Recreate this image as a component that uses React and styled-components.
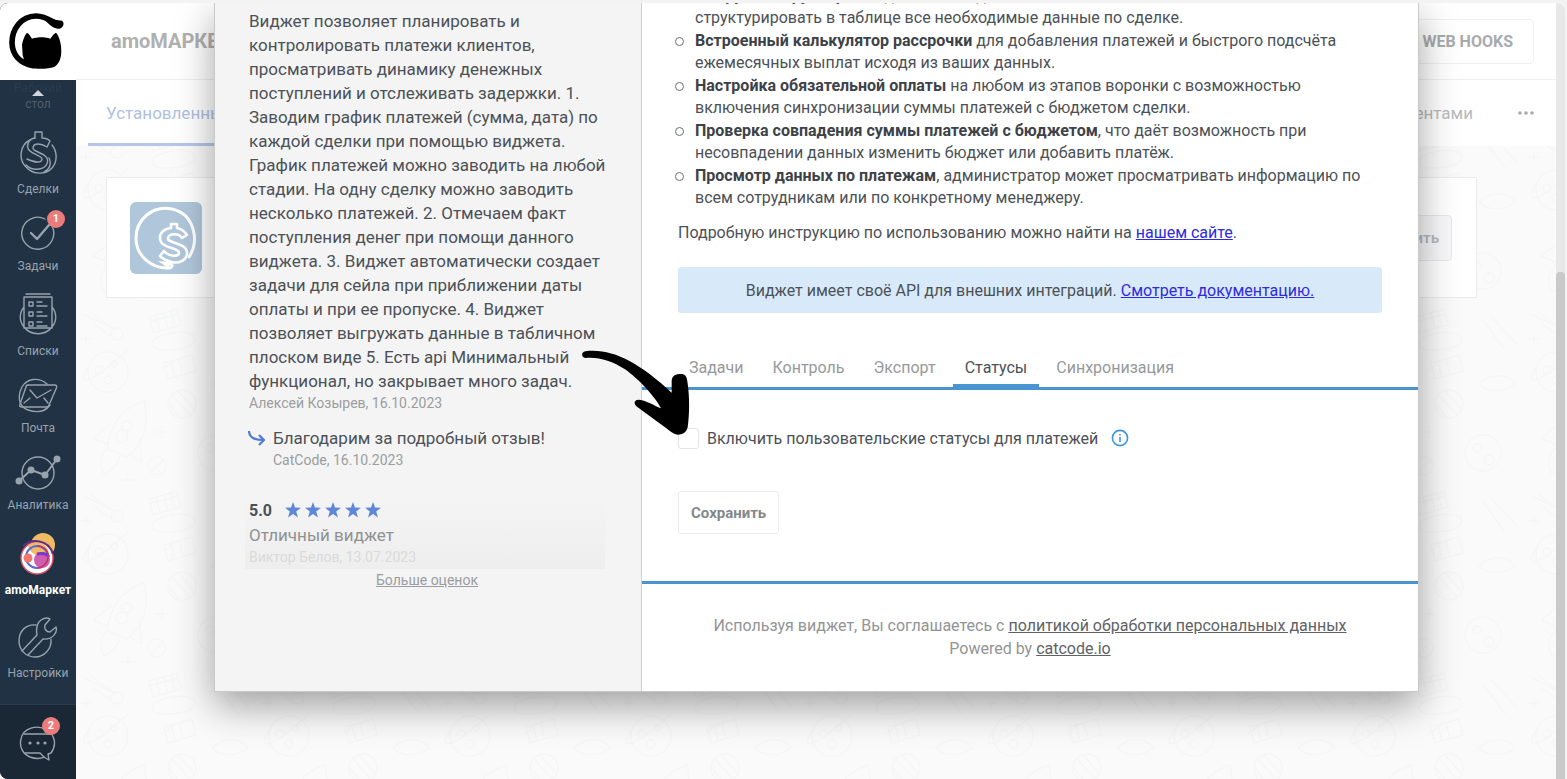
import React from "react";
import styled, { createGlobalStyle, css } from "styled-components";

const GlobalStyle = createGlobalStyle`
  * {
    box-sizing: border-box;
  }
  body {
    margin: 0;
    background: #f3f3f3;
    color: #4c5157;
    font-family: Roboto, "Noto Sans", sans-serif;
    font-size: 17px;
  }
  button, input {
    font-family: inherit;
  }
`;

const Frame = styled.div`
  height: 100vh;
  padding: 3px 2px 0 0;
  overflow: hidden;
`;

const Window = styled.div`
  display: flex;
  height: 100%;
  overflow: hidden;
  border-radius: 8px 8px 0 8px;
  background: #fafafa;
`;

/* ---------- sidebar ---------- */

const Sidebar = styled.aside`
  display: flex;
  flex-direction: column;
  flex: none;
  width: 76px;
  background: #203244;
`;

const Logo = styled.a`
  display: block;
  height: 77px;
  background: #fff;
  svg {
    display: block;
  }
`;

const Menu = styled.nav`
  display: flex;
  flex-direction: column;
  flex: 1;
  align-items: center;
  min-height: 0;
  overflow: hidden;
`;

const MenuTop = styled.a`
  position: relative;
  flex: none;
  height: 51px;
  color: #4f5e6b;
  font-size: 12px;
  line-height: 16px;
  text-align: center;
  text-decoration: none;
  span {
    color: #2a3c4d;
  }
  svg {
    position: absolute;
    top: 10px;
    left: 50%;
    margin-left: -6px;
  }
`;

const MenuItem = styled.a`
  display: flex;
  flex-direction: column;
  align-items: center;
  flex: none;
  position: relative;
  margin-bottom: 19px;
  color: ${(p) => (p.$active ? "#fff" : "#98a3ad")};
  font-size: 12px;
  font-weight: ${(p) => (p.$active ? 700 : 400)};
  line-height: 16px;
  text-decoration: none;
  svg {
    margin-bottom: 7px;
  }
`;

const Badge = styled.span`
  position: absolute;
  top: -6px;
  left: 50%;
  width: 18px;
  height: 18px;
  margin-left: 9px;
  border-radius: 50%;
  background: #ec7b7b;
  color: #fff;
  font-size: 11px;
  font-weight: 700;
  line-height: 18px;
  text-align: center;
`;

const Chat = styled.button`
  display: flex;
  justify-content: center;
  flex: none;
  height: 75px;
  padding: 21px 0 0;
  border: 0;
  border-top: 1px solid #2b3d4e;
  background: #1a2836;
  color: #98a3ad;
  span {
    position: relative;
  }
  ${Badge} {
    position: absolute;
    top: -9px;
    margin-left: 4px;
  }
`;

/* ---------- page under the modal ---------- */

const Content = styled.main`
  position: relative;
  flex: 1;
  min-width: 0;
  overflow: hidden;
`;

const Pattern = styled.svg`
  position: absolute;
  inset: 0;
  width: 100%;
  height: 100%;
`;

const Header = styled.header`
  display: flex;
  position: relative;
  align-items: center;
  justify-content: space-between;
  height: 77px;
  padding: 0 22px 0 35px;
  border-bottom: 1px solid #efefef;
  background: #fff;
`;

const Title = styled.h1`
  margin: 0;
  color: #b0b0b0;
  font-size: 20px;
`;

const HookButton = styled.button`
  height: 45px;
  padding: 0 20px;
  border: 1px solid #f0f0f0;
  border-radius: 4px;
  background: #fff;
  color: #a8abae;
  font-size: 16px;
  font-weight: 700;
`;

const Sections = styled.nav`
  display: flex;
  position: relative;
  align-items: stretch;
  height: 66px;
  padding: 0 22px 0 12px;
  background: #fff;
`;

const Section = styled.a`
  display: flex;
  align-items: center;
  margin-right: ${(p) => (p.$last ? "45px" : 0)};
  margin-left: ${(p) => (p.$last ? "auto" : 0)};
  padding: ${(p) => (p.$last ? "2px 0 0" : "2px 18px 0")};
  border-bottom: 3px solid ${(p) => (p.$active ? "#b5c6ea" : "transparent")};
  color: ${(p) => (p.$active ? "#afbfe3" : "#b8babc")};
  text-decoration: none;
`;

const MoreButton = styled.button`
  padding: 0;
  border: 0;
  background: none;
  color: #a8abae;
  line-height: 0;
`;

const Card = styled.section`
  display: flex;
  position: relative;
  align-items: center;
  justify-content: space-between;
  height: 121px;
  margin: 31px 79px 0 30px;
  padding: 0 24px 0 23px;
  border: 1px solid #ececec;
  background: #fff;
`;

const SetupButton = styled.button`
  height: 46px;
  padding: 0 12px;
  border: 1px solid #e8e8e8;
  border-radius: 4px;
  background: #f8f8fa;
  color: #b8babc;
  font-size: 15px;
  font-weight: 700;
`;

const ScrollTrack = styled.div`
  display: flex;
  flex: none;
  width: 9px;
  padding-top: 269px;
  background: #e8e8e8;
`;

const ScrollThumb = styled.div`
  flex: 1;
  border-radius: 4px 4px 0 0;
  background: #c9c9c9;
`;

/* ---------- modal ---------- */

const Overlay = styled.div`
  position: absolute;
  inset: 0;
  padding: 0 137px 0 138px;
`;

const Modal = styled.div`
  display: grid;
  grid-template-columns: 427px 1fr;
  position: relative;
  border: 1px solid #c9c9c9;
  border-top: 0;
  background: #fff;
  box-shadow: 0 14px 36px rgba(0, 0, 0, 0.36);
`;

const Reviews = styled.aside`
  padding: 6px 36px 0 34px;
  border-right: 1px solid #d0d0d0;
  background: #f4f4f4;
`;

const ReviewText = styled.p`
  margin: 0;
  line-height: 24px;
  white-space: nowrap;
  color: ${(p) => (p.$soft ? "#8f9193" : "inherit")};
`;

const Author = styled.div`
  color: ${(p) => (p.$faded ? "#dadada" : "#9b9d9f")};
  font-size: 14px;
  line-height: 20px;
`;

const Reply = styled.div`
  display: flex;
  gap: 8px;
  margin: 13px 0 27px;
  svg {
    flex: none;
    margin: 4px 0 0 -1px;
  }
`;

const Fading = styled.div`
  margin: 0 0 0 -4px;
  padding: 0 0 2px 4px;
  background: linear-gradient(#f4f4f4, #eeeeee);
`;

const Rating = styled.div`
  display: flex;
  align-items: center;
  gap: 13px;
  height: 26px;
  font-size: 16px;
  font-weight: 700;
`;

const Stars = styled.span`
  display: flex;
  gap: 4px;
`;

const MoreReviews = styled.div`
  text-align: center;
  a {
    color: #9b9d9f;
    font-size: 14px;
    line-height: 20px;
  }
`;

const Details = styled.section`
  min-width: 0;
  overflow: hidden;
  font-size: 16px;
`;

const Description = styled.div`
  padding: 0 36px;
  line-height: 22px;
  a {
    color: #2d2be0;
  }
`;

const Features = styled.ul`
  margin: -18px 0 13px;
  padding-left: 17px;
  list-style: none;
`;

const Feature = styled.li`
  position: relative;
  margin-bottom: 1px;
  white-space: nowrap;
  &::before {
    content: "";
    position: absolute;
    top: 7px;
    left: -20px;
    width: 7px;
    height: 7px;
    border: 1px solid #6a6e73;
    border-radius: 50%;
  }
  b {
    color: #3d4248;
  }
`;

const Banner = styled.div`
  margin: 23px 0 42px;
  padding: 13px 12px 11px;
  border-radius: 3px;
  background: #d8eaf9;
  text-align: center;
`;

const Tabs = styled.div`
  display: flex;
  gap: 5px;
  padding-left: 35px;
  border-bottom: 3px solid #4a94d0;
`;

const Tab = styled.button`
  padding: 1px 12px 4px;
  border: 0;
  border-bottom: 3px solid transparent;
  background: none;
  color: #97999b;
  font-size: 16px;
  line-height: 24px;
  ${(p) =>
    p.$active &&
    css`
      border-color: #4a94d0;
      color: #4c5157;
    `}
`;

const Panel = styled.form`
  padding: 36px 36px 47px;
  border-bottom: 3px solid #4a94d0;
`;

const CheckRow = styled.div`
  display: flex;
  align-items: center;
  height: 24px;
  margin-bottom: 41px;
  label {
    margin: 0 13px 0 8px;
  }
`;

const Checkbox = styled.input`
  appearance: none;
  width: 21px;
  height: 21px;
  margin: 0;
  border: 1px solid #e4e4e4;
  border-radius: 3px;
  background: #fff;
`;

const SaveButton = styled.button`
  height: 43px;
  padding: 0 12px;
  border: 1px solid #ececec;
  border-radius: 3px;
  background: #fff;
  color: #85888b;
  font-size: 15px;
  font-weight: 700;
`;

const Footer = styled.footer`
  padding: 30px 0 31px;
  color: #929496;
  line-height: 23px;
  text-align: center;
  a {
    color: #5f6265;
  }
`;

const Pointer = styled.svg`
  position: absolute;
  top: 337px;
  left: 360px;
  pointer-events: none;
`;

const line = {
  fill: "none",
  stroke: "currentColor",
  strokeWidth: 1.4,
  strokeLinecap: "round",
  strokeLinejoin: "round",
};

const CatLogo = () => (
  <svg width="76" height="77" viewBox="0 9 228 231">
    <path
      d="M176 75C152 63 138 48 108 48C62 49 36 88 36 128C37 163 58 190 100 197"
      fill="none"
      stroke="#000"
      strokeWidth="17"
      strokeLinecap="round"
    />
    <path d="M138 48C156 60 172 60 186 62C195 68 190 84 178 86C164 88 152 78 138 64Z" />
    <path d="M66 134C69 119 75 104 81 98C88 101 91 109 96 116C114 110 136 110 151 116C156 109 161 101 168 98C176 106 181 122 183 138C186 166 182 188 164 200C140 208 104 208 86 200C70 193 74 180 68 166Z" />
  </svg>
);

const DealsIcon = () => (
  <svg width="38" height="43" viewBox="0 0 38 43" {...line}>
    <path d="M16 7V1h7v6c3 0 6 1 8 3l-3 6c-3-2-6-3-9-3-5 0-7 5-2 7l8 4c7 5 3 13-5 14-5 1-10-1-13-4" />
    <path d="M16 7C9 8 7 15 10 19c3 4 13 6 13 9 0 4-7 4-15 0" />
    <path d="M11 9C1 14-1 28 7 36c7 8 20 8 26 1 6-7 5-17 0-23M25 41c5-2 8-8 5-14" />
  </svg>
);

const TasksIcon = () => (
  <svg width="36" height="35" viewBox="0 0 36 35" {...line}>
    <path d="M32 10A16 16 0 1 1 25 3" />
    <path d="M11 17l6 6L29 9" strokeWidth="2.4" />
  </svg>
);

const ListsIcon = () => (
  <svg width="38" height="43" viewBox="0 0 38 43" {...line}>
    <path d="M7 1h24M5 4h28v31H5zM5 14C0 20 0 28 5 34c7 9 21 9 28 0 5-6 5-14 0-20" />
    <path d="M10 9h4v4h-4zM10 19h4v4h-4zM10 29h4v4h-4zM18 9h5M18 13h10M18 19h5M18 23h10M18 29h5M18 33h10" />
  </svg>
);

const MailIcon = () => (
  <svg width="40" height="35" viewBox="0 0 40 35" {...line}>
    <path d="M29 6C21-1 9 0 4 9S1 29 10 32s17 2 22-5" />
    <path d="M9 7h28c2 0 2 2 1 4l-7 16c0 1-1 2-3 2H4c-2 0-3-1-2-3L8 9c0-1 1-2 3-2" />
    <path d="M12 12l7 8 14-8M12 20l-6 5M26 20l4 5" />
  </svg>
);

const AnalyticsIcon = () => (
  <svg width="46" height="35" viewBox="0 0 46 35" {...line}>
    <circle cx="23" cy="18" r="16" />
    <path d="M4 26l12-11 14 5L42 4" strokeWidth="2" />
    <g fill="currentColor" stroke="none">
      <circle cx="4" cy="26" r="3.5" />
      <circle cx="16" cy="15" r="3.5" />
      <circle cx="30" cy="20" r="3.5" />
      <circle cx="42" cy="4" r="3.5" />
    </g>
  </svg>
);

const MarketIcon = () => (
  <svg width="38" height="43" viewBox="0 0 38 43" fill="none">
    <circle cx="24" cy="13" r="12" fill="#f0bb62" />
    <circle cx="18" cy="26" r="16" fill="#fff" stroke="#e0526a" strokeWidth="1.4" />
    <path d="M9 14C17 6 30 12 30 23c-8 4-18 0-21-9z" fill="#f0bb62" />
    <path d="M4 14c8-8 26-7 30 8" stroke="#5b2e88" strokeWidth="2" />
    <circle cx="18" cy="25" r="11" stroke="#5c6bd8" strokeWidth="2" />
    <circle cx="9" cy="26" r="4.5" fill="#f2766b" />
    <circle cx="23" cy="28" r="8" fill="#cf5fae" />
    <path d="M18 22c5-1 9-1 12 3" stroke="#7c35cc" strokeWidth="3" />
    <path d="M18 14c8 0 12 6 11 12s-5 9-10 10" stroke="#c63568" strokeWidth="1.6" />
  </svg>
);

const SettingsIcon = () => (
  <svg width="40" height="41" viewBox="0 0 40 41" {...line}>
    <path d="M18 8C8 7 1 14 1 24c0 9 7 16 16 16s17-8 16-18" />
    <path d="M4 34l15-16c-1-6 0-12 4-15 3-2 6-3 9-1l-5 6c-1 4 1 7 5 7l6-5c2 6-4 13-13 12L10 38" />
  </svg>
);

const ChatIcon = () => (
  <svg width="38" height="35" viewBox="0 0 38 35" {...line}>
    <path d="M32 27c6-8 4-18-4-23C18-2 4 2 2 13c-2 8 2 15 9 18 5 2 11 2 14 0l5 3-1-6c1 0 2-1 3-1z" />
    <path d="M5 8h27M6 27h15l4 4" />
    <g fill="currentColor" stroke="none">
      <circle cx="11" cy="17" r="1.6" />
      <circle cx="19" cy="17" r="1.6" />
      <circle cx="26" cy="17" r="1.6" />
    </g>
  </svg>
);

const WidgetIcon = () => (
  <svg width="72" height="72" viewBox="0 0 72 72" fill="none">
    <rect width="72" height="72" rx="6" fill="#b0c6da" />
    <path
      d="M59 55C70 38 64 12 42 7 22 3 6 18 6 36c0 18 16 31 33 30 3 0 4-3 2-4"
      stroke="#fff"
      strokeWidth="3"
      strokeLinecap="round"
    />
    <path
      d="M57 33l-5 3c-3-5-13-5-14 0-1 6 19 4 19 15 0 7-8 11-15 9-5-1-9-3-12-6l4-5c5 6 15 6 15 2 0-6-19-4-19-15 0-6 4-9 11-10v-4h6v4c5 1 8 4 10 7z"
      stroke="#fff"
      strokeWidth="2.6"
      strokeLinejoin="round"
    />
    <path d="M42 60l-14-1 10 7z" fill="#fff" />
  </svg>
);

const Star = () => (
  <svg width="16" height="16" viewBox="0 0 16 16" fill="#5f87d9">
    <path d="M8 0l2 5.6 6 .2-4.8 3.6L13 15.5 8 12l-5 3.5 1.8-6.1L0 5.8l6-.2z" />
  </svg>
);

const Doodles = () => (
  <Pattern aria-hidden="true">
    <defs>
      <pattern id="space" x="0" y="115" width="181" height="182" patternUnits="userSpaceOnUse">
        <g fill="none" stroke="#f5f6f6" strokeWidth="1.4">
          <circle cx="41" cy="34" r="6" />
          <path d="M8 14l28 14M14 12l26 18M18 24l16 12" />
          <circle cx="32" cy="72" r="20" />
          <circle cx="23" cy="70" r="4" />
          <circle cx="38" cy="64" r="3" />
          <circle cx="32" cy="80" r="4" />
          <path d="M14 64c-16 22-4 24 38-14M98 60c-4 4-9 8-12 10" />
          <path d="M73 17l28-8 4 16-28 8zM80 15l4 16M88 13l4 16M95 11l4 16M88 63l28-8 4 16-28 8zM95 61l4 16M103 59l4 16M75 21l28-7" />
          <path d="M80 38c10-5 30-9 38-2 4 8-6 14-30 14-12 0-16-7-8-12z" />
          <circle cx="106" cy="104" r="14" />
          <path d="M96 95l18 20M102 91l16 18M93 104l10 13" />
          <path d="M68 101c-20 6-34 22-37 48l20 8c18-14 22-34 17-56zM35 124l-18 14 14 6M64 138l1 24-12-8M30 150c-8 8-6 16-2 24 8-4 14-10 16-18" />
          <circle cx="51" cy="126" r="5" />
          <circle cx="46" cy="136" r="6" />
          <circle cx="81" cy="166" r="9" />
          <path d="M75 172l12-12M86 126v12M80 132h12M52 174v14M44 180h18M10 34v10M5 39h10" />
          <circle cx="140" cy="153" r="18" />
          <circle cx="134" cy="148" r="4" />
          <circle cx="146" cy="160" r="5" />
          <path d="M140 20l22 30M148 16l26 28M136 84c12-12 30-10 36 0-10 8-26 10-36 0z" />
        </g>
      </pattern>
    </defs>
    <rect width="100%" height="100%" fill="url(#space)" />
  </Pattern>
);

const MENU = [
  { label: "Сделки", Icon: DealsIcon },
  { label: "Задачи", Icon: TasksIcon, count: 1 },
  { label: "Списки", Icon: ListsIcon },
  { label: "Почта", Icon: MailIcon },
  { label: "Аналитика", Icon: AnalyticsIcon },
  { label: "amoМаркет", Icon: MarketIcon, active: true },
  { label: "Настройки", Icon: SettingsIcon },
];

const REVIEW = [
  "Виджет позволяет планировать и",
  "контролировать платежи клиентов,",
  "просматривать динамику денежных",
  "поступлений и отслеживать задержки. 1.",
  "Заводим график платежей (сумма, дата) по",
  "каждой сделки при помощью виджета.",
  "График платежей можно заводить на любой",
  "стадии. На одну сделку можно заводить",
  "несколько платежей. 2. Отмечаем факт",
  "поступления денег при помощи данного",
  "виджета. 3. Виджет автоматически создает",
  "задачи для сейла при приближении даты",
  "оплаты и при ее пропуске. 4. Виджет",
  "позволяет выгружать данные в табличном",
  "плоском виде 5. Есть api Минимальный",
  "функционал, но закрывает много задач.",
];

const FEATURES = [
  ["Выгрузка и группировка", " данных по сделкам, чтобы", "структурировать в таблице все необходимые данные по сделке."],
  ["Встроенный калькулятор рассрочки", " для добавления платежей и быстрого подсчёта", "ежемесячных выплат исходя из ваших данных."],
  ["Настройка обязательной оплаты", " на любом из этапов воронки с возможностью", "включения синхронизации суммы платежей с бюджетом сделки."],
  ["Проверка совпадения суммы платежей с бюджетом", ", что даёт возможность при", "несовпадении данных изменить бюджет или добавить платёж."],
  ["Просмотр данных по платежам", ", администратор может просматривать информацию по", "всем сотрудникам или по конкретному менеджеру."],
];

const TABS = ["Задачи", "Контроль", "Экспорт", "Статусы", "Синхронизация"];

export default () => {
  return (
    <Frame>
      <GlobalStyle />
      <Window>
        <Sidebar>
          <Logo href="#" aria-label="CatCode">
            <CatLogo />
          </Logo>
          <Menu>
            <MenuTop href="#">
              <span>Рабочий</span>
              <br />
              стол
              <svg width="12" height="6" viewBox="0 0 12 6" fill="#cfd5da">
                <path d="M0 6l6-6 6 6z" />
              </svg>
            </MenuTop>
            {MENU.map(({ label, Icon, count, active }) => (
              <MenuItem key={label} href="#" $active={active}>
                <Icon />
                {label}
                {count && <Badge>{count}</Badge>}
              </MenuItem>
            ))}
          </Menu>
          <Chat aria-label="Чаты">
            <span>
              <ChatIcon />
              <Badge>2</Badge>
            </span>
          </Chat>
        </Sidebar>

        <Content>
          <Doodles />
          <Header>
            <Title>amoМАРКЕТ</Title>
            <HookButton>WEB HOOKS</HookButton>
          </Header>
          <Sections>
            <Section href="#" $active>Установленные</Section>
            <Section href="#" $last>Работа с клиентами</Section>
            <MoreButton aria-label="Ещё">
              <svg width="16" height="4" viewBox="0 0 16 4" fill="currentColor">
                <circle cx="2" cy="2" r="1.8" />
                <circle cx="8" cy="2" r="1.8" />
                <circle cx="14" cy="2" r="1.8" />
              </svg>
            </MoreButton>
          </Sections>
          <Card>
            <WidgetIcon />
            <SetupButton>Настроить</SetupButton>
          </Card>

          <Overlay>
            <Modal>
              <Reviews>
                <ReviewText>
                  {REVIEW.map((t) => (
                    <React.Fragment key={t}>
                      {t}
                      <br />
                    </React.Fragment>
                  ))}
                </ReviewText>
                <Author>Алексей Козырев, 16.10.2023</Author>
                <Reply>
                  <svg width="17" height="17" viewBox="0 0 17 17" fill="none" stroke="#4f7bd6" strokeWidth="2.2">
                    <path d="M1 1c0 6 4 9 14 9M11 5l5 5-5 5" />
                  </svg>
                  <div>
                    <ReviewText>Благодарим за подробный отзыв!</ReviewText>
                    <Author>CatCode, 16.10.2023</Author>
                  </div>
                </Reply>
                <Fading>
                  <Rating>
                    5.0
                    <Stars>
                      {[1, 2, 3, 4, 5].map((n) => (
                        <Star key={n} />
                      ))}
                    </Stars>
                  </Rating>
                  <ReviewText $soft>Отличный виджет</ReviewText>
                  <Author $faded>Виктор Белов, 13.07.2023</Author>
                </Fading>
                <MoreReviews>
                  <a href="#">Больше оценок</a>
                </MoreReviews>
              </Reviews>

              <Details>
                <Description>
                  <Features>
                    {FEATURES.map(([name, first, second]) => (
                      <Feature key={name}>
                        <b>{name}</b>
                        {first}
                        <br />
                        {second}
                      </Feature>
                    ))}
                  </Features>
                  Подробную инструкцию по использованию можно найти на <a href="#">нашем сайте</a>.
                  <Banner>
                    Виджет имеет своё API для внешних интеграций. <a href="#">Смотреть документацию.</a>
                  </Banner>
                </Description>
                <Tabs role="tablist">
                  {TABS.map((t) => (
                    <Tab key={t} role="tab" aria-selected={t === "Статусы"} $active={t === "Статусы"}>
                      {t}
                    </Tab>
                  ))}
                </Tabs>
                <Panel>
                  <CheckRow>
                    <Checkbox type="checkbox" id="statuses" />
                    <label htmlFor="statuses">Включить пользовательские статусы для платежей</label>
                    <svg width="18" height="18" viewBox="0 0 18 18" fill="none" stroke="#3d97d9" strokeWidth="1.6">
                      <circle cx="9" cy="9" r="7.6" />
                      <path d="M9 8v5M9 5v1.6" />
                    </svg>
                  </CheckRow>
                  <SaveButton type="button">Сохранить</SaveButton>
                </Panel>
                <Footer>
                  Используя виджет, Вы соглашаетесь с <a href="#">политикой обработки персональных данных</a>
                  <br />
                  Powered by <a href="#">catcode.io</a>
                </Footer>
              </Details>

              <Pointer width="150" height="120" viewBox="0 0 450 360">
                <path d="M31 54C18 52 18 36 31 34C110 24 190 66 290 158L290 122C292 106 302 102 318 102C330 102 335 108 337 124C344 170 344 220 338 262C334 278 322 284 308 284C296 282 286 274 276 266L186 200C174 190 178 178 192 179C216 182 236 196 258 205C240 170 190 116 150 88C110 62 70 50 31 54Z" />
              </Pointer>
            </Modal>
          </Overlay>
        </Content>

        <ScrollTrack>
          <ScrollThumb />
        </ScrollTrack>
      </Window>
    </Frame>
  );
};
